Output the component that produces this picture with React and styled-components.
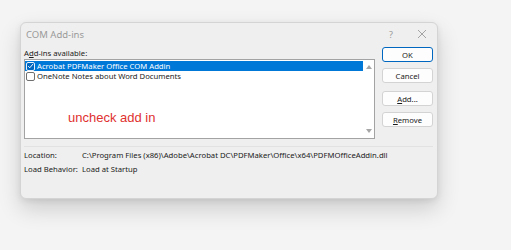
import React from 'react'
import styled, { createGlobalStyle } from 'styled-components'

const GlobalStyle = createGlobalStyle`
  html, body {
    margin: 0;
    background: #f4f4f4;
    font-family: "Noto Sans", "Open Sans", sans-serif;
  }
`

const addins = [
  { name: 'Acrobat PDFMaker Office COM Addin', checked: true, selected: true },
  { name: 'OneNote Notes about Word Documents', checked: false, selected: false },
]

const Check = ({ checked, selected }) => (
  <Box $checked={checked} $selected={selected}>
    {checked && (
      <svg width="8" height="8" viewBox="0 0 8 8">
        <path d="M1.3 4.2 L3.2 6 L6.8 1.8" fill="none" stroke="#fff" strokeWidth="1.1" />
      </svg>
    )}
  </Box>
)

const App = () => {
  return (
    <>
      <GlobalStyle />
      <Page>
        <Dialog>
          <TitleBar>
            <Title>COM Add-ins</Title>
            <TitleIcon>?</TitleIcon>
            <TitleIcon>
              <svg width="10" height="10" viewBox="0 0 10 10">
                <path d="M1 1 L9 9 M9 1 L1 9" stroke="#9a9a9a" strokeWidth="0.9" />
              </svg>
            </TitleIcon>
          </TitleBar>

          <Main>
            <LeftCol>
              <Label>A<u>d</u>d-ins available:</Label>
              <ListBox>
                <Rows>
                  {addins.map((a) => (
                    <Row key={a.name} $selected={a.selected}>
                      <Check checked={a.checked} selected={a.selected} />
                      <span>{a.name}</span>
                    </Row>
                  ))}
                </Rows>
                <ScrollBar>
                  <Arrow $up />
                  <Arrow />
                </ScrollBar>
                <Note>uncheck add in</Note>
              </ListBox>
            </LeftCol>

            <Buttons>
              <Button $default>OK</Button>
              <Button>Cancel</Button>
              <Button $gap>
                <u>A</u>dd...
              </Button>
              <Button>
                <u>R</u>emove
              </Button>
            </Buttons>
          </Main>

          <Info>
            <InfoRow>
              <InfoLabel>Location:</InfoLabel>
              <span>C:\Program Files (x86)\Adobe\Acrobat DC\PDFMaker\Office\x64\PDFMOfficeAddin.dll</span>
            </InfoRow>
            <InfoRow>
              <InfoLabel>Load Behavior:</InfoLabel>
              <span>Load at Startup</span>
            </InfoRow>
          </Info>
        </Dialog>
      </Page>
    </>
  )
}

export default App

const Page = styled.div`
  width: 511px;
  height: 250px;
  padding: 22px 0 0 20px;
  box-sizing: border-box;
`

const Dialog = styled.div`
  width: 418px;
  height: 177px;
  box-sizing: border-box;
  background: #efefef;
  border: 1px solid #d4d4d4;
  border-radius: 6px;
  box-shadow: 0 10px 22px rgba(0, 0, 0, 0.16), 0 2px 6px rgba(0, 0, 0, 0.08);
  display: flex;
  flex-direction: column;
  color: #1a1a1a;
  font-size: 7.7px;
`

const TitleBar = styled.div`
  display: flex;
  align-items: center;
  height: 20px;
  margin-top: 1px;
  padding: 0 9px 0 5px;
`

const Title = styled.div`
  flex: 1;
  font-size: 9.5px;
  color: #9a9a9a;
`

const TitleIcon = styled.div`
  width: 12px;
  margin-left: 19px;
  display: flex;
  justify-content: center;
  color: #9a9a9a;
  font-size: 9px;
`

const Main = styled.div`
  display: flex;
  gap: 7px;
  padding: 2px 4px 0 3px;
`

const LeftCol = styled.div`
  display: flex;
  flex-direction: column;
  width: 351px;
`

const Label = styled.div`
  height: 12px;
  line-height: 12px;
  margin-top: 1px;
`

const ListBox = styled.div`
  position: relative;
  height: 80px;
  box-sizing: border-box;
  background: #fff;
  border: 1px solid #a3a3a3;
  display: flex;
`

const Rows = styled.div`
  flex: 1;
  padding-top: 1px;
`

const Row = styled.div`
  display: flex;
  align-items: center;
  gap: 2px;
  height: 10px;
  padding-left: 1px;
  background: ${(p) => (p.$selected ? '#0078d7' : 'transparent')};
  color: ${(p) => (p.$selected ? '#fff' : '#1a1a1a')};
  white-space: nowrap;
`

const Box = styled.div`
  width: 9px;
  height: 9px;
  box-sizing: border-box;
  border-radius: 2px;
  border: 1px solid ${(p) => (p.$selected ? '#e8f1fb' : '#6f6f6f')};
  background: ${(p) => (p.$checked ? '#0067c0' : '#fff')};
  display: flex;
  align-items: center;
  justify-content: center;
`

const ScrollBar = styled.div`
  width: 11px;
  display: flex;
  flex-direction: column;
  justify-content: space-between;
  align-items: center;
  padding: 5px 0 5px;
`

const Arrow = styled.div`
  width: 0;
  height: 0;
  border-left: 3px solid transparent;
  border-right: 3px solid transparent;
  ${(p) => (p.$up ? 'border-bottom: 4px solid #a6a6a6;' : 'border-top: 4px solid #a6a6a6;')}
`

const Note = styled.div`
  position: absolute;
  left: 43px;
  top: 50px;
  font-family: "Liberation Sans", Arial, sans-serif;
  font-size: 13px;
  color: #e0312f;
`

const Buttons = styled.div`
  display: flex;
  flex-direction: column;
  gap: 6px;
  padding-top: 1px;
`

const Button = styled.div`
  width: 51px;
  height: 15px;
  box-sizing: border-box;
  display: flex;
  align-items: center;
  justify-content: center;
  background: #fdfdfd;
  border: 1px solid ${(p) => (p.$default ? '#0067c0' : '#d3d3d3')};
  border-radius: 3px;
  margin-top: ${(p) => (p.$gap ? '2px' : '0')};
  color: #1a1a1a;
`

const Info = styled.div`
  margin: 7px 4px 0 3px;
  border-top: 1px solid #e2e2e2;
  padding-top: 2px;
  display: flex;
  flex-direction: column;
  gap: 2px;
`

const InfoRow = styled.div`
  display: flex;
  height: 12px;
  align-items: center;
  white-space: nowrap;
`

const InfoLabel = styled.div`
  width: 58px;
`
